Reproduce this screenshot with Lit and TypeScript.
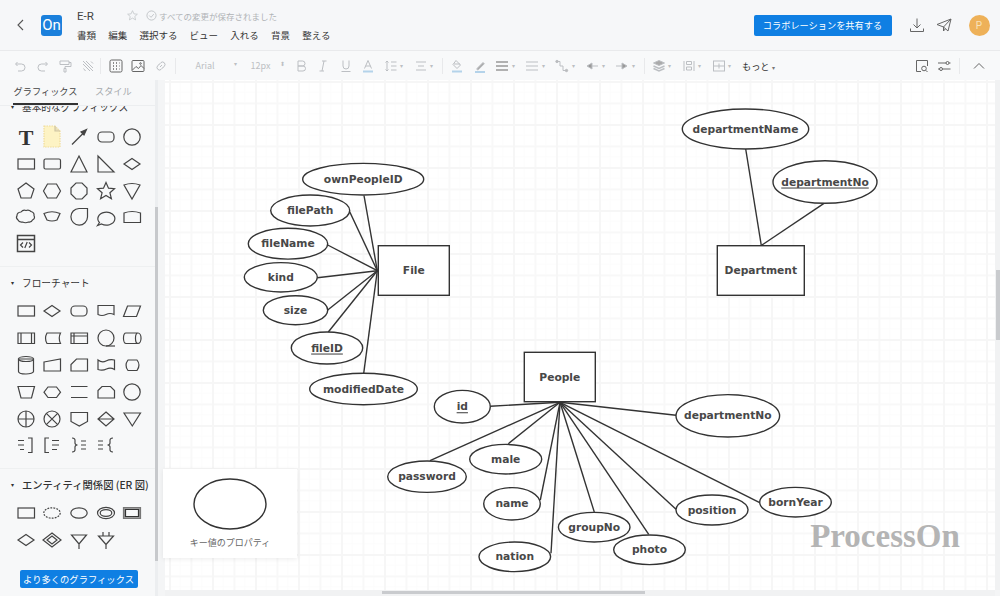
import { LitElement, html, css, svg } from 'lit';
import { customElement } from 'lit/decorators.js';

// attribute ovals: cx, cy, rx, ry, label, key attribute, end of the connector on the outline
const attrs: [number, number, number, number, string, boolean, number, number][] = [
  [363.2, 179.2, 60.5, 15.8, 'ownPeopleID', false, 364, 195.5],
  [310.2, 210.5, 39.5, 15.5, 'filePath', false, 349.7, 211.7],
  [288, 243.7, 39.7, 15.4, 'fileName', false, 327.7, 245],
  [280.8, 277.3, 36.5, 14.7, 'kind', false, 317.3, 277.7],
  [295.5, 310.2, 32.2, 14.5, 'size', false, 327.7, 310],
  [327, 348, 35.7, 16, 'fileID', true, 328.3, 332],
  [363.5, 389, 53.8, 15.7, 'modifiedDate', false, 363.7, 373.3],
  [462.3, 406.7, 28, 16.3, 'id', true, 490.3, 406.3],
  [427, 476.7, 39.3, 15.7, 'password', false, 430, 460.7],
  [505.7, 459.2, 36, 14.8, 'male', false, 508.3, 443.7],
  [512, 503.8, 28.3, 16.2, 'name', false, 540.3, 500],
  [514.8, 556.8, 35.8, 14.8, 'nation', false, 551, 553.3],
  [594.2, 527.2, 35.8, 14.8, 'groupNo', false, 594.3, 512],
  [649.5, 549.8, 35.8, 14.8, 'photo', false, 648.7, 534.3],
  [712, 510, 36, 15, 'position', false, 676, 509.3],
  [795.5, 502.2, 35.8, 14.8, 'bornYear', false, 759.7, 502.7],
  [727.8, 415.8, 51.8, 21.2, 'departmentNo', false, 676, 415.3],
  [745.5, 129, 63.2, 20, 'departmentName', false, 745.7, 149],
  [825, 182, 52, 21.3, 'departmentNo', true, 824, 203.3],
];

const entities: [number, number, number, number, string, number, number, number, number][] = [
  [378.3, 245.7, 71, 49.6, 'File', 377.3, 270.7, 0, 7],
  [524.3, 352.3, 71, 49.4, 'People', 560, 402.3, 7, 17],
  [717.3, 245.7, 87, 49.6, 'Department', 761.3, 245.5, 17, 19],
];

const shapes = {
  text: svg`<text x="13" y="21" class="bigt">T</text>`,
  note: svg`<path d="M5 2h11l5 5v16H5z" fill="#fdf3c4" stroke="#f0dc9a" stroke-dasharray="1.5 1"/><path d="M16 2v5h5" fill="#eadfb8" stroke="#cfc6a4"/>`,
  arrow: svg`<path d="M6 20.500L18 8.500"/><path d="M20.500 5.500l-5.500 2.500 3 3z" fill="#444"/>`,
  round: svg`<rect x="5" y="8" width="16" height="10" rx="4"/>`,
  circle: svg`<circle cx="13" cy="13" r="8.200"/>`,
  rect: svg`<rect x="5" y="8" width="16.500" height="10"/>`,
  rrect: svg`<rect x="5" y="8" width="16.500" height="10" rx="1.500"/>`,
  tri: svg`<path d="M13 5l8 16H5z"/>`,
  rtri: svg`<path d="M5 5v16h16z"/>`,
  dia: svg`<path d="M13 7.500l8 5.500-8 5.500-8-5.500z"/>`,
  penta: svg`<path d="M13 5l8 6-3 9H8l-3-9z"/>`,
  hexa: svg`<path d="M8.500 6h9l4 7-4 7h-9l-4-7z"/>`,
  octa: svg`<path d="M10 5h6l5 5v6l-5 5h-6l-5-5v-6z"/>`,
  star: svg`<path d="M13 4.500l2.500 5.700 6 .5-4.600 4 1.500 6-5.400-3.200-5.400 3.200 1.500-6-4.600-4 6-.5z"/>`,
  shield: svg`<path d="M5 7q8-3 16 0l-8 14z"/>`,
  cloud: svg`<path d="M8 8q2-2.500 5-1.500 3-1 5 1 3.500 1 3 4 1.500 3-1.500 4.500-1 2.500-4 2-3 1.500-6 0-3.500.5-4.500-2-2.500-2-1-4.500 0-3 4-3.500z"/>`,
  trap: svg`<path d="M5 9.500q8-3.500 16 0l-3 6.500q-5 2-10 0z"/>`,
  drop: svg`<path d="M13 4.500h8.500V13a8.300 8.300 0 1 1-8.500-8.500z"/>`,
  bubble: svg`<path d="M6.500 18.500l-2 3 4-1.500a8.500 6.500 0 1 0-2-1.500z"/>`,
  tape: svg`<path d="M5 18.500V9q8-3 16.500 0v9.500z"/>`,
  code: svg`<path d="M4.500 4.500h17v16h-17z M4.500 8.500h17" stroke-width="1.500"/><path d="M10 11.500l-2.500 2.500 2.500 2.500M16 11.500l2.500 2.500-2.500 2.500M14.200 11l-2.400 6"/>`,
  doc: svg`<path d="M5 7.500h16v9q-4-2-8 0t-8 0z"/>`,
  para: svg`<path d="M8.500 8h13l-4 10.500h-13z"/>`,
  pre: svg`<path d="M5 8h16.500v10.500H5z M8 8v10.500M18.500 8v10.500"/>`,
  stored: svg`<path d="M8 8h13.500q-2.500 5 0 10.500H8q-3-5 0-10.500z"/>`,
  internal: svg`<path d="M5 8h16.500v10.500H5z M5 11h16.500M8 8v10.500"/>`,
  seqtape: svg`<circle cx="13" cy="13" r="8"/><path d="M13 21h9"/>`,
  drum: svg`<path d="M7 8h12a3 5.200 0 0 1 0 10.500H7a2.500 5.200 0 0 1 0-10.500z M19 8a2.500 5.200 0 0 0 0 10.500"/>`,
  cyl: svg`<path d="M5.500 7v12.500a7.500 2.500 0 0 0 15 0V7z"/><ellipse cx="13" cy="7" rx="7.500" ry="2.500"/>`,
  manual: svg`<path d="M5 10l16.500-3v12H5z"/>`,
  card: svg`<path d="M10.500 7h11v12H5v-6.500z"/>`,
  wave: svg`<path d="M5 8q4 3 8 1t8.500-1v9.500q-4-2.500-8-.5t-8.500.5z"/>`,
  display: svg`<path d="M9 8h9q4 5 0 10.500H9q-4-5 0-10.500z" stroke-linejoin="round"/>`,
  mop: svg`<path d="M5 7.500h16.500l-3 11.500h-10.500z"/>`,
  prep: svg`<path d="M9 8h8.500l4 5.200-4 5.300h-8.500l-4-5.300z"/>`,
  lines: svg`<path d="M5 7.500h16.500M5 18.500h16.500"/>`,
  loop: svg`<path d="M9 7.500h8.500l4 4v7.500H5v-7.500z"/>`,
  or: svg`<circle cx="13" cy="13" r="8"/><path d="M5 13h16M13 5v16"/>`,
  sum: svg`<circle cx="13" cy="13" r="8"/><path d="M7.300 7.300l11.400 11.400M18.700 7.300L7.300 18.700"/>`,
  off: svg`<path d="M5 6.500h16.500v9l-8.200 4.500-8.300-4.500z"/>`,
  sort: svg`<path d="M13 6l8 7-8 7-8-7z M5 13h16"/>`,
  down: svg`<path d="M5 7h16.500l-8.200 13z"/>`,
  b1: svg`<path d="M5 8.500h6M5 13h6M7 17.500h4M15 6h4v14.500h-4"/>`,
  b2: svg`<path d="M10 6H6v14.500h4M13 8.500h7M13 13h7M13 17.500h5"/>`,
  b3: svg`<path d="M6 6q3.500 0 3 3.500t2.500 3.500q-3 0-2.500 3.500t-3 3.500M15 9h5M15 13h5M15 17h5"/>`,
  b4: svg`<path d="M5 9h5M5 13h5M5 17h5M20 6q-3.500 0-3 3.500t-2.500 3.500q3 0 2.500 3.500t3 3.500"/>`,
  dashed: svg`<ellipse cx="13" cy="13" rx="8.200" ry="5.200" stroke-dasharray="1.800 1.200"/>`,
  ell: svg`<ellipse cx="13" cy="13" rx="8.200" ry="5.200"/>`,
  dbl: svg`<ellipse cx="13" cy="13" rx="8.500" ry="5.700"/><ellipse cx="13" cy="13" rx="5.800" ry="3.400"/>`,
  thick: svg`<path d="M4.500 7.500h17v11h-17z" fill="#999" stroke="#777"/><path d="M6.500 9.500h13v7h-13z" fill="#f7f8f9" stroke="#333"/>`,
  ddia: svg`<path d="M13 6l9 7-9 7-9-7z"/><path d="M13 9l5 4-5 4-5-4z"/>`,
  fork: svg`<path d="M5.500 8h15L13 17zM13 17v5"/>`,
  fork2: svg`<path d="M5.500 9h15L13 17.500zM13 17.500v4.500M10 5v4M16 5v4"/>`,
};
type Shape = keyof typeof shapes;

const basic: Shape[] = ['text', 'note', 'arrow', 'round', 'circle', 'rect', 'rrect', 'tri', 'rtri', 'dia', 'penta', 'hexa', 'octa', 'star', 'shield', 'cloud', 'trap', 'drop', 'bubble', 'tape', 'code'];
const flow: Shape[] = ['rect', 'dia', 'round', 'doc', 'para', 'pre', 'stored', 'internal', 'seqtape', 'drum', 'cyl', 'manual', 'card', 'wave', 'display', 'mop', 'prep', 'lines', 'loop', 'circle', 'or', 'sum', 'off', 'sort', 'down', 'b1', 'b2', 'b3', 'b4'];
const er: Shape[] = ['rect', 'dashed', 'ell', 'dbl', 'thick', 'dia', 'ddia', 'fork', 'fork2'];

const tools = {
  undo: svg`<path d="M5.500 4L3.500 6l2 2M4 6h5.500a3.500 3.500 0 0 1 0 7H6"/>`,
  redo: svg`<path d="M10.500 4l2 2-2 2M12 6H6.500a3.500 3.500 0 0 0 0 7H10"/>`,
  paint: svg`<path d="M3 3h9v3.500H3zM12 4.500h2v4H8v2M7 10.500h2v3.500H7z"/>`,
  clear: svg`<path d="M3 3l10 10M6 3l7 7M3 6l7 7M11 3.500l2 2M3.500 10.500L5.500 13"/>`,
  grid: svg`<rect x="2" y="2" width="12" height="12" rx="1.500"/><path d="M5 5h1M8 5h1M11 5h.5M5 8h1M8 8h1M11 8h.5M5 11h1M8 11h1M11 11h.5" stroke-width="1.400"/>`,
  image: svg`<rect x="2" y="2.500" width="12" height="11" rx="1"/><path d="M2.500 12l3.500-3.500 2.500 2 2.500-3 3 3"/><circle cx="10.500" cy="5.500" r=".8"/>`,
  link: svg`<path d="M7 9l2-2M6 6.500L8 4.500a2.500 2.500 0 0 1 3.500 3.500l-2 2M10 9.500l-2 2A2.500 2.500 0 0 1 4.500 8l2-2"/>`,
  bold: svg`<path d="M5 3h4.500a2.500 2.500 0 0 1 0 5H5zM5 8h5a2.500 2.500 0 0 1 0 5H5z"/>`,
  italic: svg`<path d="M7 3h4.500M4.500 13H9M9 3l-2 10"/>`,
  under: svg`<path d="M5 2.500v5.500a3 3 0 0 0 6 0V2.500M3.500 13.500h9"/>`,
  color: svg`<path d="M4.500 10.500L8 2.500l3.500 8M5.600 8h4.800"/><path d="M3 13.500h10" stroke="#b4d3ea" stroke-width="2"/>`,
  height: svg`<path d="M4 3v10M2.500 4.500L4 3l1.500 1.500M2.500 11.500L4 13l1.500-1.500M8 4h5.500M8 8h5.500M8 12h5.500"/>`,
  align: svg`<path d="M3 4h10M5 8h6M3 12h10"/>`,
  fill: svg`<path d="M7 2.500l4.500 4.500-3.500 3.500-4-4zM5 6h6"/><path d="M3 13.500h10" stroke="#b4d3ea" stroke-width="2"/>`,
  pen: svg`<path d="M5 10.500l6-6 1.300 1.300-6 6H5z" fill="#aaa"/><path d="M3 14h10" stroke="#b4d3ea" stroke-width="2"/>`,
  menu: svg`<path d="M2 4h12M2 8h12M2 12h12" stroke-width="1.500" stroke="#999"/>`,
  dash: svg`<path d="M2 4h12M2 8h12M2 12h12"/>`,
  conn: svg`<path d="M3 3.500h3v4.500h3v4.500h3.500"/><circle cx="3" cy="3.500" r="1.200" fill="#bbb"/><circle cx="12.500" cy="12.500" r="1.200" fill="#bbb"/>`,
  left: svg`<path d="M6 8h8"/><path d="M8 5L3 8l5 3z" fill="#999"/>`,
  right: svg`<path d="M2 8h8"/><path d="M8 5l5 3-5 3z" fill="#999"/>`,
  layer: svg`<path d="M8 2.500l5.500 2.500L8 7.500 2.500 5z" fill="#aaa"/><path d="M2.500 8L8 10.500 13.500 8M2.500 10.500L8 13l5.500-2.500" stroke-width="1.400"/>`,
  dist: svg`<path d="M3 3v10M13 3v10M5.500 3.500h5v3h-5zM5.500 9h5v3h-5z"/>`,
  arrange: svg`<rect x="2.500" y="3" width="11" height="10"/><path d="M2.500 8h11M8 5.500v5"/>`,
  search: svg`<path d="M13.500 8V2.500h-11v11H7"/><circle cx="10" cy="10.500" r="2.300"/><path d="M11.800 12.300l1.700 1.700"/>`,
  sliders: svg`<path d="M2 5h8M13 5h1.500M2 11h1.500M6.500 11h8"/><circle cx="11.500" cy="5" r="1.500"/><circle cx="5" cy="11" r="1.500"/>`,
  up: svg`<path d="M3 10.500L8 5.500l5 5"/>`,
};
type Tool = keyof typeof tools;

@customElement('app-root')
export class AppRoot extends LitElement {
  static styles = css`
    :host {
      display: block;
      width: 1000px;
      height: 596px;
      overflow: hidden;
      position: relative;
      background: #f4f5f6;
      color: #333;
      font-family: 'Noto Sans CJK JP', 'Liberation Sans', sans-serif;
    }
    .header {
      height: 50px;
      display: flex;
      align-items: center;
      background: #f6f7f9;
      border-bottom: 1px solid #e9eaec;
      padding: 0 10.500px 0 15px;
      box-sizing: content-box;
    }
    .back { width: 12px; height: 16px; fill: none; stroke: #555; stroke-width: 1.100; }
    .logo {
      width: 21px;
      height: 21px;
      margin: 0 15px 0 14px;
      background: #1b80dc;
      border-radius: 3px;
      color: #fff;
      font: 400 15px/21px Roboto, sans-serif;
      text-align: center;
    }
    .titles { flex: 1; display: flex; flex-direction: column; gap: 4px; }
    .title-row { display: flex; align-items: center; height: 15px; }
    .doc-name { width: 49px; font: 11.500px Roboto, sans-serif; color: #444; }
    .star { width: 13px; height: 13px; fill: none; stroke: #c4c7ca; }
    .check { width: 11px; height: 11px; margin: 0 2px 0 7px; fill: none; stroke: #c0c3c6; }
    .saved { font-size: 8.500px; color: #b0b3b6; }
    .menu { display: flex; gap: 12.200px; font-size: 9.500px; color: #333; height: 15px; align-items: center; }
    .share {
      width: 138px;
      height: 21px;
      background: #0f7fe3;
      border-radius: 2px;
      color: #fff;
      font-size: 9.200px;
      line-height: 21px;
      text-align: center;
    }
    .head-icon { width: 16px; height: 16px; fill: none; stroke: #666; stroke-width: 1; }
    .head-icon.first { margin-left: 17px; }
    .head-icon.last { margin-left: 11px; margin-right: 17px; }
    .avatar {
      width: 21px;
      height: 21px;
      border-radius: 50%;
      background: #eeb159;
      color: #f8e2bb;
      font: 10px/21px Roboto, sans-serif;
      text-align: center;
    }

    .toolbar {
      height: 29px;
      display: flex;
      align-items: center;
      padding-left: 12px;
      background: #f8f9fa;
      color: #bcbfc3;
      font-size: 9px;
    }
    .group { display: flex; align-items: center; gap: 6.500px; }
    .group svg { width: 16px; height: 16px; fill: none; stroke: #bcbfc3; stroke-width: 1; flex: none; }
    .group svg.on { stroke: #666; }
    .pair { width: 23.500px; display: flex; align-items: center; gap: 1.500px; flex: none; }
    .sep { width: 1px; height: 16px; background: #e8e9eb; margin: 0 6px; }
    .sep.first { margin: 0 6.500px 0 4.500px; }
    .sep.plain { margin: 0 5px 0 0; }
    .font-name { width: 41px; display: flex; justify-content: space-between; margin-left: 14px; }
    .font-size { width: 34px; display: flex; justify-content: space-between; margin: 0 8px 0 14px; }
    .caret { font-size: 6px; color: #bcbfc3; }
    .more { color: #333; font-size: 9.200px; margin-left: 8px; }
    .more .caret { margin-left: 2px; color: #777; }
    .tool-right { margin-left: auto; margin-right: 13px; }

    .main { height: 516px; display: flex; }
    .sidebar { width: 155px; display: flex; flex-direction: column; background: #f7f8f9; }
    .tabs {
      height: 25px;
      display: flex;
      gap: 17px;
      margin: 0 0 0 13px;
      font-size: 9.200px;
      line-height: 23px;
      color: #a5a8ac;
      flex: none;
    }
    .tabs .active { color: #444; border-bottom: 2px solid #333; height: 23px; width: 65px; text-align: center; }
    .list { flex: 1; overflow: hidden; min-height: 0; border-top: 1px solid #eceef0; }
    .section { padding: 8px 0 8.500px; border-bottom: 1px solid #eef0f1; }
    .section.clipped { margin-top: -15px; }
    .section.clipped .sec-title { margin-bottom: 9px; }
    .sec-title {
      height: 16px;
      margin-bottom: 7px;
      padding-left: 11px;
      font-size: 9.700px;
      line-height: 16px;
      color: #333;
      display: flex;
      gap: 8px;
      white-space: nowrap;
    }
    .sec-title i { font-style: normal; font-size: 6px; }
    .section.er .sec-title { font-size: 10.300px; font-weight: 500; }
    .palette {
      display: grid;
      grid-template-columns: repeat(5, 26.700px);
      grid-auto-rows: 26.800px;
      padding-left: 12.500px;
    }
    .palette svg { width: 26px; height: 26px; fill: none; stroke: #444; stroke-width: 1.200; }
    .bigt { font: 700 22px 'Liberation Serif', serif; fill: #333; stroke: none; text-anchor: middle; }
    .foot { height: 34px; flex: none; display: flex; align-items: center; justify-content: center; padding-left: 2px; }
    .more-btn {
      width: 118px;
      height: 18px;
      margin-top: -1px;
      background: #0f7fe3;
      border-radius: 2px;
      color: #fff;
      font-size: 9.300px;
      line-height: 18px;
      text-align: center;
    }
    .rail { width: 3px; flex: none; background: #eceef0; padding-top: 127px; box-sizing: border-box; }
    .rail div { height: 354px; background: #c7c9cc; }
    .gutter { width: 7px; flex: none; }

    .stage { flex: 1; display: grid; grid-template-columns: 830px 5px; grid-template-rows: 510px 6px; }
    .paper {
      background-color: #fff;
      background-image:
        linear-gradient(#f6f6f6 2px, transparent 2px),
        linear-gradient(90deg, #f6f6f6 2px, transparent 2px),
        linear-gradient(#f8f8f8 2px, transparent 2px),
        linear-gradient(90deg, #f8f8f8 2px, transparent 2px),
        linear-gradient(#fcfcfc 1px, transparent 1px),
        linear-gradient(90deg, #fcfcfc 1px, transparent 1px);
      background-size: 43px 43px, 43px 43px, 21.500px 21.500px, 21.500px 21.500px, 10.750px 10.750px, 10.750px 10.750px;
      background-position: 0 1px, 4px 0, 0 1px, 4px 0, 0 1px, 4px 0;
    }
    .paper svg { display: block; width: 830px; height: 510px; }
    .paper .edge { stroke: #333; stroke-width: 1.400; fill: none; }
    .paper .node { stroke: #333; stroke-width: 1.400; fill: #fff; }
    .paper text {
      font: 700 10.700px 'DejaVu Sans', sans-serif;
      fill: #484848;
      text-anchor: middle;
      dominant-baseline: central;
    }
    .paper text.key { text-decoration: underline; }
    .paper text.mark { font: 700 33px 'Liberation Serif', serif; fill: #b4b4b4; }
    .vbar { background: #f1f2f3; padding-top: 190px; }
    .vbar div { width: 4px; margin-left: 1px; height: 70px; background: #c9cbce; }
    .hbar { background: #f1f2f3; padding: 1px 0 0 217px; }
    .hbar div { width: 263px; height: 3px; background: #c9cbce; }

    .preview {
      position: absolute;
      left: 163px;
      top: 469px;
      width: 134px;
      height: 89px;
      background: #fff;
      box-shadow: 0 1px 5px rgba(0, 0, 0, 0.08);
      display: flex;
      flex-direction: column;
      align-items: center;
      font-size: 9px;
      color: #666;
    }
    .preview svg { width: 76px; height: 56px; margin-top: 7px; fill: none; stroke: #333; stroke-width: 1.400; }
    .preview span { margin-top: 4px; }
  `;

  private tool(name: Tool, on = false) {
    return html`<svg viewBox="0 0 16 16" class=${on ? 'on' : ''}>${tools[name]}</svg>`;
  }

  private withCaret(name: Tool) {
    return html`<div class="pair">${this.tool(name)}<span class="caret">▾</span></div>`;
  }

  private palette(list: Shape[]) {
    return html`<div class="palette">
      ${list.map((s) => html`<svg viewBox="0 0 26 26">${shapes[s]}</svg>`)}
    </div>`;
  }

  private renderDiagram() {
    return html`<svg viewBox="165 80 830 510">
      ${entities.map(
        ([x, y, w, h, , hx, hy, from, to]) => svg`
          ${attrs.slice(from, to).map((a) => svg`<line class="edge" x1=${a[6]} y1=${a[7]} x2=${hx} y2=${hy}></line>`)}
          <rect class="node" x=${x} y=${y} width=${w} height=${h}></rect>`,
      )}
      ${entities.map(([x, y, w, h, label]) => svg`<text x=${x + w / 2} y=${y + h / 2}>${label}</text>`)}
      ${attrs.map(
        ([cx, cy, rx, ry, label, key]) => svg`
          <ellipse class="node" cx=${cx} cy=${cy} rx=${rx} ry=${ry}></ellipse>
          <text class=${key ? 'key' : ''} x=${cx} y=${cy}>${label}</text>`,
      )}
      <text class="mark" x="885" y="536">ProcessOn</text>
    </svg>`;
  }

  render() {
    return html`
      <div class="header">
        <svg class="back" viewBox="0 0 12 16"><path d="M8 3L3 8l5 5"></path></svg>
        <div class="logo">On</div>
        <div class="titles">
          <div class="title-row">
            <span class="doc-name">E-R</span>
            <svg class="star" viewBox="0 0 16 16"><path d="M8 2l1.800 4 4.200.4-3.200 2.800 1 4.200L8 11.200l-3.800 2.200 1-4.200L2 6.400 6.200 6z"></path></svg>
            <svg class="check" viewBox="0 0 12 12"><circle cx="6" cy="6" r="5"></circle><path d="M3.500 6l2 2 3-3.500"></path></svg>
            <span class="saved">すべての変更が保存されました</span>
          </div>
          <div class="menu">
            <span>書類</span><span>編集</span><span>選択する</span><span>ビュー</span><span>入れる</span><span>背景</span><span>整える</span>
          </div>
        </div>
        <div class="share">コラボレーションを共有する</div>
        <svg class="head-icon first" viewBox="0 0 16 16"><path d="M8 1.500v9M4.500 7.500L8 11l3.500-3.500M1.500 11.500v3h13v-3"></path></svg>
        <svg class="head-icon last" viewBox="0 0 16 16"><path d="M1 7.500L15 2l-3 12-4.500-4zM15 2L7.500 10v4l2-2.300"></path></svg>
        <div class="avatar">P</div>
      </div>

      <div class="toolbar">
        <div class="group">${this.tool('undo')}${this.tool('redo')}${this.tool('paint')}${this.tool('clear')}</div>
        <div class="sep first"></div>
        <div class="group">${this.tool('grid', true)}${this.tool('image', true)}${this.tool('link')}</div>
        <div class="sep"></div>
        <div class="font-name"><span>Arial</span><span class="caret">▾</span></div>
        <div class="font-size"><span>12px</span><span class="caret">⬍</span></div>
        <div class="group">
          ${this.tool('bold')}${this.tool('italic')}${this.tool('under')}${this.tool('color')}
          ${this.withCaret('height')}${this.withCaret('align')}
        </div>
        <div class="sep"></div>
        <div class="group">
          ${this.tool('fill')}${this.tool('pen')}${this.withCaret('menu')}${this.withCaret('dash')}
          ${this.withCaret('conn')}${this.withCaret('left')}${this.withCaret('right')}
        </div>
        <div class="sep"></div>
        <div class="group">${this.withCaret('layer')}${this.withCaret('dist')}${this.withCaret('arrange')}</div>
        <div class="more">もっと<span class="caret">▾</span></div>
        <div class="group tool-right">
          ${this.tool('search', true)}${this.tool('sliders', true)}<div class="sep plain"></div>${this.tool('up', true)}
        </div>
      </div>

      <div class="main">
        <div class="sidebar">
          <div class="tabs"><span class="active">グラフィックス</span><span>スタイル</span></div>
          <div class="list">
            <div class="section clipped">
              <div class="sec-title"><i>▾</i><span>基本的なグラフィックス</span></div>
              ${this.palette(basic)}
            </div>
            <div class="section">
              <div class="sec-title"><i>▾</i><span>フローチャート</span></div>
              ${this.palette(flow)}
            </div>
            <div class="section er">
              <div class="sec-title"><i>▾</i><span>エンティティ関係図 (ER 図)</span></div>
              ${this.palette(er)}
            </div>
          </div>
          <div class="foot"><div class="more-btn">より多くのグラフィックス</div></div>
        </div>
        <div class="rail"><div></div></div>
        <div class="gutter"></div>
        <div class="stage">
          <div class="paper">${this.renderDiagram()}</div>
          <div class="vbar"><div></div></div>
          <div class="hbar"><div></div></div>
        </div>
      </div>

      <div class="preview">
        <svg viewBox="0 0 76 56"><ellipse cx="38" cy="28" rx="36" ry="25"></ellipse></svg>
        <span>キー値のプロパティ</span>
      </div>
    `;
  }
}
